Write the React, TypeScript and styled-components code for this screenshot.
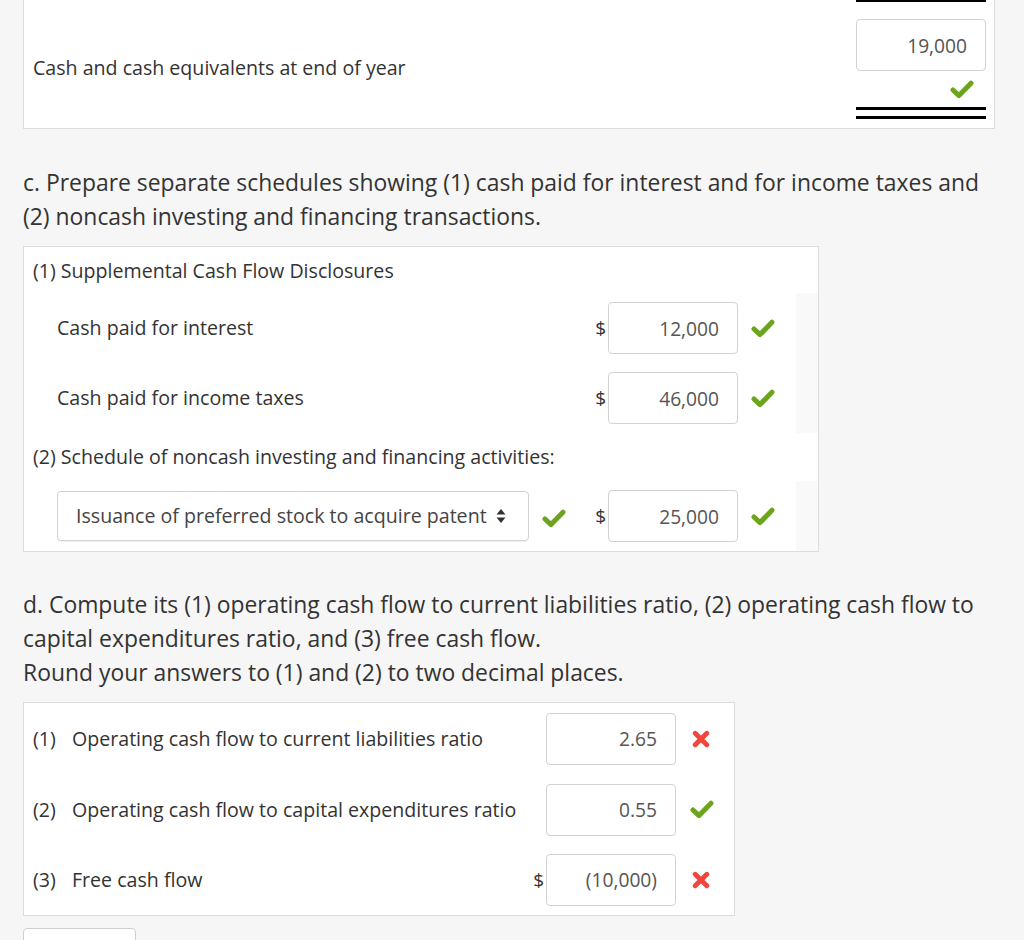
import React from "react";
import styled, {createGlobalStyle} from "styled-components";

const GlobalStyle = createGlobalStyle`
    html, body {
        margin: 0;
        padding: 0;
        background: #f6f6f6;
    }
    body {
        font-family: "Open Sans", "Liberation Sans", Arial, sans-serif;
        color: #333;
        -webkit-font-smoothing: antialiased;
    }
`;

const Check: React.FC = () => (
    <svg width="24" height="19" viewBox="0 0 24 19">
        <path d="M3 10 L9 15.6 L21 3.2" fill="none" stroke="#6ca41e" strokeWidth="5"
              strokeLinecap="round" strokeLinejoin="round"/>
    </svg>
);

const Cross: React.FC = () => (
    <svg width="18" height="18" viewBox="0 0 18 18">
        <path d="M3.2 3.2 L14.8 14.8 M14.8 3.2 L3.2 14.8" fill="none" stroke="#f2463c" strokeWidth="4.8"
              strokeLinecap="round"/>
    </svg>
);

const SelectArrows: React.FC = () => (
    <svg width="10" height="16" viewBox="0 0 10 16">
        <path d="M5 1 L9.5 6.6 L0.5 6.6 Z M5 15 L9.5 9.4 L0.5 9.4 Z" fill="#333"/>
    </svg>
);

type Mark = "ok" | "bad";

const MarkIcon: React.FC<{mark: Mark}> = ({mark}) => (mark === "ok" ? <Check/> : <Cross/>);

const App: React.FC = () => {
    return (
        <Page>
            <GlobalStyle/>

            <TotalPanel>
                <TotalLabel>Cash and cash equivalents at end of year</TotalLabel>
                <TotalValue>
                    <TopRule/>
                    <ValueBox>19,000</ValueBox>
                    <TotalMark><Check/></TotalMark>
                    <DoubleRule/>
                </TotalValue>
            </TotalPanel>

            <Heading $top={37}>
                c. Prepare separate schedules showing (1) cash paid for interest and for income taxes and<br/>
                (2) noncash investing and financing transactions.
            </Heading>

            <SchedulePanel>
                <SectionTitle>(1) Supplemental Cash Flow Disclosures</SectionTitle>
                <ScheduleRow>
                    <RowLabel>Cash paid for interest</RowLabel>
                    <Dollar>$</Dollar>
                    <ValueBox>12,000</ValueBox>
                    <MarkCell $pad={13}><Check/></MarkCell>
                    <Strip/>
                </ScheduleRow>
                <ScheduleRow>
                    <RowLabel>Cash paid for income taxes</RowLabel>
                    <Dollar>$</Dollar>
                    <ValueBox>46,000</ValueBox>
                    <MarkCell $pad={13}><Check/></MarkCell>
                    <Strip/>
                </ScheduleRow>
                <SectionTitle>(2) Schedule of noncash investing and financing activities:</SectionTitle>
                <ScheduleRow>
                    <RowLabel>
                        <SelectBox>
                            <span>Issuance of preferred stock to acquire patent</span>
                            <SelectArrows/>
                        </SelectBox>
                        <SelectMark><Check/></SelectMark>
                    </RowLabel>
                    <Dollar>$</Dollar>
                    <ValueBox>25,000</ValueBox>
                    <MarkCell $pad={13}><Check/></MarkCell>
                    <Strip/>
                </ScheduleRow>
            </SchedulePanel>

            <Heading $top={36}>
                d. Compute its (1) operating cash flow to current liabilities ratio, (2) operating cash flow to<br/>
                capital expenditures ratio, and (3) free cash flow.<br/>
                Round your answers to (1) and (2) to two decimal places.
            </Heading>

            <RatioPanel>
                {ratios.map((r) => (
                    <RatioRow key={r.num}>
                        <RatioNum>{r.num}</RatioNum>
                        <RatioLabel>{r.label}</RatioLabel>
                        {r.dollar && <Dollar>$</Dollar>}
                        <ValueBox>{r.value}</ValueBox>
                        <MarkCell $pad={r.mark === "ok" ? 14 : 16}><MarkIcon mark={r.mark}/></MarkCell>
                    </RatioRow>
                ))}
            </RatioPanel>

            <BottomButton/>
        </Page>
    );
};

export default App;

const ratios: {num: string, label: string, value: string, dollar: boolean, mark: Mark}[] = [
    {num: "(1)", label: "Operating cash flow to current liabilities ratio", value: "2.65", dollar: false, mark: "bad"},
    {num: "(2)", label: "Operating cash flow to capital expenditures ratio", value: "0.55", dollar: false, mark: "ok"},
    {num: "(3)", label: "Free cash flow", value: "(10,000)", dollar: true, mark: "bad"},
];

const Page = styled.div`
    width: 972px;
    padding-left: 23px;
    height: 940px;
    overflow: hidden;
    font-size: 19.6px;
`;

const Panel = styled.div`
    box-sizing: border-box;
    background: #fff;
    border: 1px solid #dcdcdc;
`;

const TotalPanel = styled(Panel)`
    display: flex;
    align-items: center;
    border-top: none;
    padding: 0 8px 9px 9px;
`;

const TotalLabel = styled.div`
    flex: 1;
    line-height: 24px;
    padding-top: 16px;
`;

const TotalValue = styled.div`
    display: flex;
    flex-direction: column;
    width: 130px;
`;

const TopRule = styled.div`
    height: 2px;
    background: #000;
    margin-bottom: 17px;
`;

const TotalMark = styled.div`
    height: 36px;
    display: flex;
    align-items: center;
    justify-content: flex-end;
    padding-right: 12px;
`;

const DoubleRule = styled.div`
    height: 6px;
    border-top: 3px solid #000;
    border-bottom: 3px solid #000;
`;

const Heading = styled.div<{$top: number}>`
    margin: ${p => p.$top}px 0 12px;
    font-size: 22.9px;
    line-height: 34px;
    white-space: nowrap;
    color: #333;
`;

const SchedulePanel = styled(Panel)`
    width: 796px;
`;

const SectionTitle = styled.div`
    padding: 12px 9px 10px;
    line-height: 24px;
    &:nth-of-type(n+2) {
        padding: 12px 9px;
    }
`;

const ScheduleRow = styled.div`
    display: flex;
    align-items: center;
    height: 70px;
`;

const RowLabel = styled.div`
    flex: 1;
    display: flex;
    align-items: center;
    padding-left: 33px;
    line-height: 24px;
`;

const Dollar = styled.span`
    margin-right: 2px;
    line-height: 24px;
    font-size: 19px;
`;

const ValueBox = styled.div`
    box-sizing: border-box;
    width: 130px;
    height: 52px;
    border: 1px solid #d2d2d2;
    border-radius: 4px;
    background: #fff;
    display: flex;
    align-items: center;
    justify-content: flex-end;
    padding-right: 18px;
    font-size: 19.2px;
    color: #555;
`;

const MarkCell = styled.div<{$pad: number}>`
    box-sizing: border-box;
    width: 58px;
    padding-left: ${p => p.$pad}px;
    display: flex;
    align-items: center;
`;

const Strip = styled.div`
    align-self: stretch;
    width: 22px;
    background: #f9f9f9;
`;

const SelectBox = styled.div`
    box-sizing: border-box;
    width: 472px;
    height: 50px;
    border: 1px solid #d2d2d2;
    border-radius: 4px;
    box-shadow: 0 1px 1px rgba(0, 0, 0, 0.06);
    display: flex;
    align-items: center;
    gap: 9px;
    padding: 0 0 0 18px;
    white-space: nowrap;
    color: #444;
`;

const SelectMark = styled.div`
    display: flex;
    margin-left: 13px;
    padding-top: 4px;
`;

const RatioPanel = styled(Panel)`
    width: 712px;
`;

const RatioRow = styled.div`
    display: flex;
    align-items: center;
    height: 71px;
    line-height: 24px;
    &:last-child {
        height: 70px;
    }
`;

const RatioNum = styled.div`
    width: 39px;
    padding-left: 9px;
`;

const RatioLabel = styled.div`
    flex: 1;
`;

const BottomButton = styled.div`
    width: 113px;
    height: 40px;
    margin-top: 12px;
    box-sizing: border-box;
    border: 1px solid #cfcfcf;
    border-radius: 4px;
    background: #fff;
`;
